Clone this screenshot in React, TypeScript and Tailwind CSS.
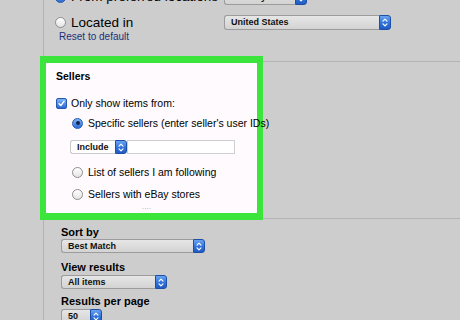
import React from 'react'

function Stepper() {
  return (
    <div className="flex h-full w-[12px] shrink-0 items-center justify-center rounded-r-[3px] border border-[#1d4fa8] bg-gradient-to-b from-[#6aa4f0] via-[#3576dc] to-[#1f5bc2]">
      <svg width="6" height="9" viewBox="0 0 6 9" fill="none" stroke="white" strokeWidth="1.2" strokeLinecap="round" strokeLinejoin="round">
        <path d="M1 3.2 L3 1.2 L5 3.2" />
        <path d="M1 5.8 L3 7.8 L5 5.8" />
      </svg>
    </div>
  )
}

function Select({ label, className, light }: { label: string; className: string; light?: boolean }) {
  return (
    <div className={`flex shrink-0 ${className}`}>
      <div
        className={`flex min-w-0 flex-1 items-center rounded-l-[3px] border border-r-0 pl-[6px] text-[9px] font-semibold leading-none text-[#111] ${
          light ? 'border-[#c9c9c9] bg-white' : 'border-[#9c9c9c] bg-gradient-to-b from-[#e6e6e6] to-[#d3d3d3]'
        }`}
      >
        {label}
      </div>
      <Stepper />
    </div>
  )
}

function Radio({ on }: { on?: boolean }) {
  if (on) {
    return (
      <div className="flex h-[11px] w-[11px] shrink-0 items-center justify-center rounded-full border border-[#2457b0] bg-gradient-to-b from-[#7fb3f5] to-[#2c6ad2]">
        <div className="h-[4px] w-[4px] rounded-full bg-[#0e2552]" />
      </div>
    )
  }
  return <div className="h-[11px] w-[11px] shrink-0 rounded-full border border-[#8e8e8e] bg-gradient-to-b from-[#ffffff] to-[#e4e4e4]" />
}

function Checkbox() {
  return (
    <div className="flex h-[11px] w-[11px] shrink-0 items-center justify-center rounded-[2px] border border-[#2457b0] bg-gradient-to-b from-[#7fb3f5] to-[#2c6ad2]">
      <svg width="7" height="7" viewBox="0 0 7 7" fill="none" stroke="white" strokeWidth="1.4" strokeLinecap="round" strokeLinejoin="round">
        <path d="M1 3.8 L2.8 5.6 L6 1.3" />
      </svg>
    </div>
  )
}

export default function App() {
  return (
    <div className="flex h-[320px] w-[460px] overflow-hidden bg-[#cdcdcd] font-['Liberation_Sans',Arial,sans-serif] text-black">
      <div className="w-[44px] shrink-0 border-r border-[#b3b3b3]" />

      <div className="flex min-w-0 flex-1 flex-col">
        {/* location options, first row cut off at the top */}
        <div className="-mt-[12px] flex flex-col">
          <div className="flex h-[18px] items-center">
            <div className="flex w-[180px] items-center gap-[5px] pl-[11px]">
              <Radio on />
              <span className="text-[13.5px] leading-none">From preferred locations</span>
            </div>
            <Select label="US Only" className="h-[16px] w-[83px]" />
          </div>
          <div className="mt-[8px] flex h-[17px] items-center">
            <div className="flex w-[180px] items-center gap-[5px] pl-[11px]">
              <Radio />
              <span className="text-[13.5px] leading-none">Located in</span>
            </div>
            <Select label="United States" className="h-[15px] w-[167px]" />
          </div>
          <div className="pl-[15px] text-[10px] leading-[12px] text-[#1c2f78]">Reset to default</div>
        </div>

        {/* sellers section, highlighted */}
        <div className="mt-[18px] border-y border-[#b3b3b3]">
          <div className="-mb-[2px] -ml-[4px] -mt-[6px] flex h-[164px] w-[223px] flex-col border-x-[6px] border-y-[7px] border-[#3be53b] bg-[#fefafd] text-[10.5px] leading-[12px]">
            <div className="mt-[7px] pl-[10px] font-bold">Sellers</div>
            <div className="mt-[15px] flex items-center gap-[4px] pl-[10px]">
              <Checkbox />
              <span>Only show items from:</span>
            </div>
            <div className="mt-[8px] flex items-center gap-[5px] whitespace-nowrap pl-[26px]">
              <Radio on />
              <span>Specific sellers (enter seller's user IDs)</span>
            </div>
            <div className="mt-[11px] flex h-[14px] pl-[24px]">
              <Select label="Include" light className="h-[14px] w-[57px]" />
              <div className="h-[14px] w-[108px] border border-[#cfcfcf] bg-white" />
            </div>
            <div className="mt-[12px] flex items-center gap-[5px] pl-[26px]">
              <Radio />
              <span>List of sellers I am following</span>
            </div>
            <div className="mt-[10px] flex items-center gap-[5px] pl-[26px]">
              <Radio />
              <span>Sellers with eBay stores</span>
            </div>
            <div className="mt-auto flex justify-center pb-[1px] pr-[10px] text-[7px] leading-[6px] text-[#9a9a9a]">····</div>
          </div>
        </div>

        {/* sort and view options */}
        <div className="flex flex-col pl-[17px] text-[11px] leading-[13px]">
          <div className="mt-[7px] font-bold">Sort by</div>
          <Select label="Best Match" className="h-[14px] w-[144px]" />
          <div className="mt-[8px] font-bold">View results</div>
          <Select label="All items" className="mt-[1px] h-[14px] w-[106px]" />
          <div className="mt-[6px] font-bold">Results per page</div>
          <Select label="50" className="mt-[1px] h-[14px] w-[41px]" />
        </div>
      </div>
    </div>
  )
}
